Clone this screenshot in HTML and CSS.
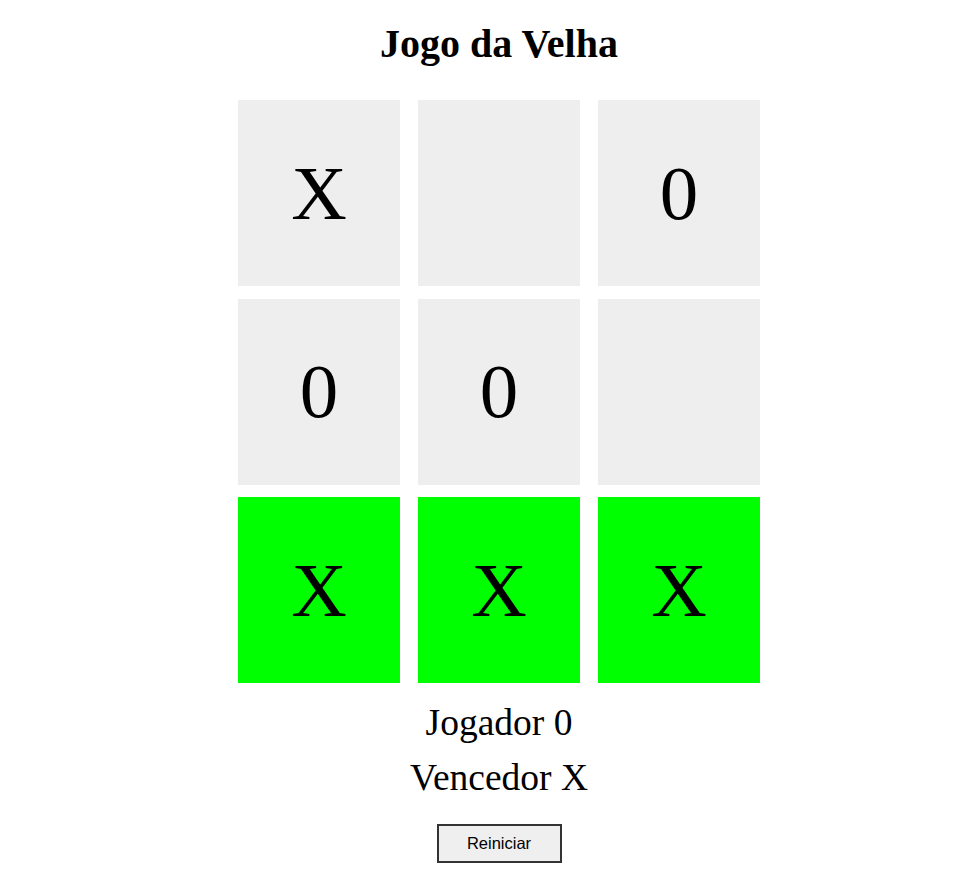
FILE: index.html
```html
<!DOCTYPE html>
<html lang="pt">
<head>
    <meta charset="UTF-8">
    <meta name="viewport" content="width=device-width, initial-scale=1.0">
    <title>Jogo da Velha</title>
    <link rel="stylesheet" href="styles.css">
</head>
<body>
    <h1>Jogo da Velha</h1>

    <div class="board">
        <div class="cell">X</div>
        <div class="cell"></div>
        <div class="cell">0</div>
        <div class="cell">0</div>
        <div class="cell">0</div>
        <div class="cell"></div>
        <div class="cell win">X</div>
        <div class="cell win">X</div>
        <div class="cell win">X</div>
    </div>

    <p class="status">Jogador 0</p>
    <p class="status">Vencedor X</p>

    <button class="reset">Reiniciar</button>
</body>
</html>
```

FILE: styles.css
```css
body {
    font-family: "Liberation Serif", "Times New Roman", serif;
    margin: 0;
    padding: 0 0 0 21px;
    text-align: center;
    color: #000;
    background: #fff;
}

h1 {
    font-size: 40px;
    margin: 0;
    padding-top: 21px;
    line-height: 45px;
}

.board {
    display: grid;
    grid-template-columns: repeat(3, 162px);
    grid-auto-rows: 186px;
    column-gap: 18px;
    row-gap: 12.5px;
    justify-content: center;
    margin-top: 34px;
}

.cell {
    background: #eeeeee;
    display: flex;
    align-items: center;
    justify-content: center;
    font-size: 77px;
}

.cell.win {
    background: #00ff00;
}

.status {
    font-size: 37.5px;
    margin: 0;
    line-height: 55px;
}

.status:first-of-type {
    margin-top: 12px;
}

.reset {
    font-family: "Liberation Sans", Arial, sans-serif;
    font-size: 16.5px;
    width: 125px;
    height: 39px;
    margin-top: 19px;
    background: #efefef;
    border: 2px solid #333;
    color: #000;
}
```
